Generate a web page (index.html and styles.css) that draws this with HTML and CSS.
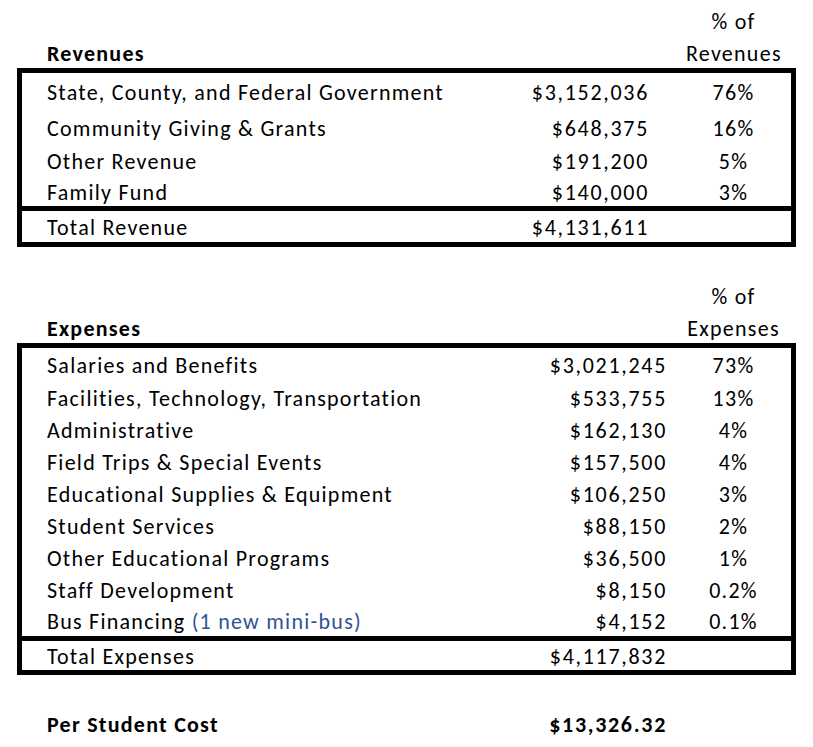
FILE: index.html
```html
<!DOCTYPE html>
<html lang="en">
<head>
<meta charset="utf-8">
<title>Budget</title>
<link rel="stylesheet" href="styles.css">
</head>
<body>
<main class="sheet">
  <section class="section">
    <div class="head rev">
      <div class="head-row"><span></span><span class="pct">% of</span></div>
      <div class="head-row"><span class="bold">Revenues</span><span class="pct">Revenues</span></div>
    </div>
    <div class="box">
      <div class="lines rev-lines rev">
        <div class="row"><span>State, County, and Federal Government</span><span class="amt">$3,152,036</span><span class="pct">76%</span></div>
        <div class="row"><span>Community Giving &amp; Grants</span><span class="amt">$648,375</span><span class="pct">16%</span></div>
        <div class="row"><span>Other Revenue</span><span class="amt">$191,200</span><span class="pct">5%</span></div>
        <div class="row"><span>Family Fund</span><span class="amt">$140,000</span><span class="pct">3%</span></div>
      </div>
      <div class="total rev">
        <div class="row"><span>Total Revenue</span><span class="amt">$4,131,611</span><span class="pct"></span></div>
      </div>
    </div>
  </section>

  <section class="section exp-section">
    <div class="head exp">
      <div class="head-row"><span></span><span class="pct">% of</span></div>
      <div class="head-row"><span class="bold">Expenses</span><span class="pct">Expenses</span></div>
    </div>
    <div class="box">
      <div class="lines exp-lines exp">
        <div class="row"><span>Salaries and Benefits</span><span class="amt">$3,021,245</span><span class="pct">73%</span></div>
        <div class="row"><span>Facilities, Technology, Transportation</span><span class="amt">$533,755</span><span class="pct">13%</span></div>
        <div class="row"><span>Administrative</span><span class="amt">$162,130</span><span class="pct">4%</span></div>
        <div class="row"><span>Field Trips &amp; Special Events</span><span class="amt">$157,500</span><span class="pct">4%</span></div>
        <div class="row"><span>Educational Supplies &amp; Equipment</span><span class="amt">$106,250</span><span class="pct">3%</span></div>
        <div class="row"><span>Student Services</span><span class="amt">$88,150</span><span class="pct">2%</span></div>
        <div class="row"><span>Other Educational Programs</span><span class="amt">$36,500</span><span class="pct">1%</span></div>
        <div class="row"><span>Staff Development</span><span class="amt">$8,150</span><span class="pct">0.2%</span></div>
        <div class="row"><span>Bus Financing <span class="note">(1 new mini-bus)</span></span><span class="amt">$4,152</span><span class="pct">0.1%</span></div>
      </div>
      <div class="total exp">
        <div class="row"><span>Total Expenses</span><span class="amt">$4,117,832</span><span class="pct"></span></div>
      </div>
    </div>
  </section>

  <section class="summary exp">
    <div class="row"><span class="bold">Per Student Cost</span><span class="amt bold">$13,326.32</span><span class="pct"></span></div>
  </section>
</main>
</body>
</html>
```

FILE: styles.css
```css
* { box-sizing: border-box; }

html, body {
  margin: 0;
  padding: 0;
  background: #ffffff;
}

body {
  font-family: "Carlito", Lato, "Liberation Sans", sans-serif;
  font-size: 22px;
  letter-spacing: 1.25px;
  color: #000000;
}

.sheet {
  width: 813px;
  padding: 3px 17px 0 17px;
}

.section {
  display: flex;
  flex-direction: column;
}

.exp-section {
  margin-top: 31px;
}

.head {
  display: grid;
  grid-template-rows: 34px 31px;
  padding: 0 5px;
}

.head-row,
.row {
  display: grid;
  grid-template-columns: 1fr auto 96px;
  align-items: center;
  padding-top: 2px;
  padding-left: 25px;
  padding-right: 10px;
  white-space: nowrap;
}

.head-row {
  grid-template-columns: 1fr 96px;
}

.bold {
  font-weight: 700;
}

.pct {
  text-align: center;
  padding-left: 1px;
}

.amt {
  text-align: right;
  letter-spacing: 1.7px;
}

.rev .amt { padding-right: 36px; }
.exp .amt { padding-right: 18px; }

.box {
  border: 5px solid #000000;
}

.lines {
  display: grid;
}

.rev-lines {
  grid-template-rows: 37px 34px 32px 30px;
}

.exp-lines {
  grid-template-rows: 33px repeat(7, 32px) 31px;
}

.total {
  border-top: 5px solid #000000;
  display: grid;
  grid-template-rows: 31px;
}

.exp.total {
  grid-template-rows: 29px;
}

.note {
  color: #2f5496;
}

.summary {
  margin-top: 31px;
  display: grid;
  grid-template-rows: 34px;
  padding: 0 5px;
}
```
